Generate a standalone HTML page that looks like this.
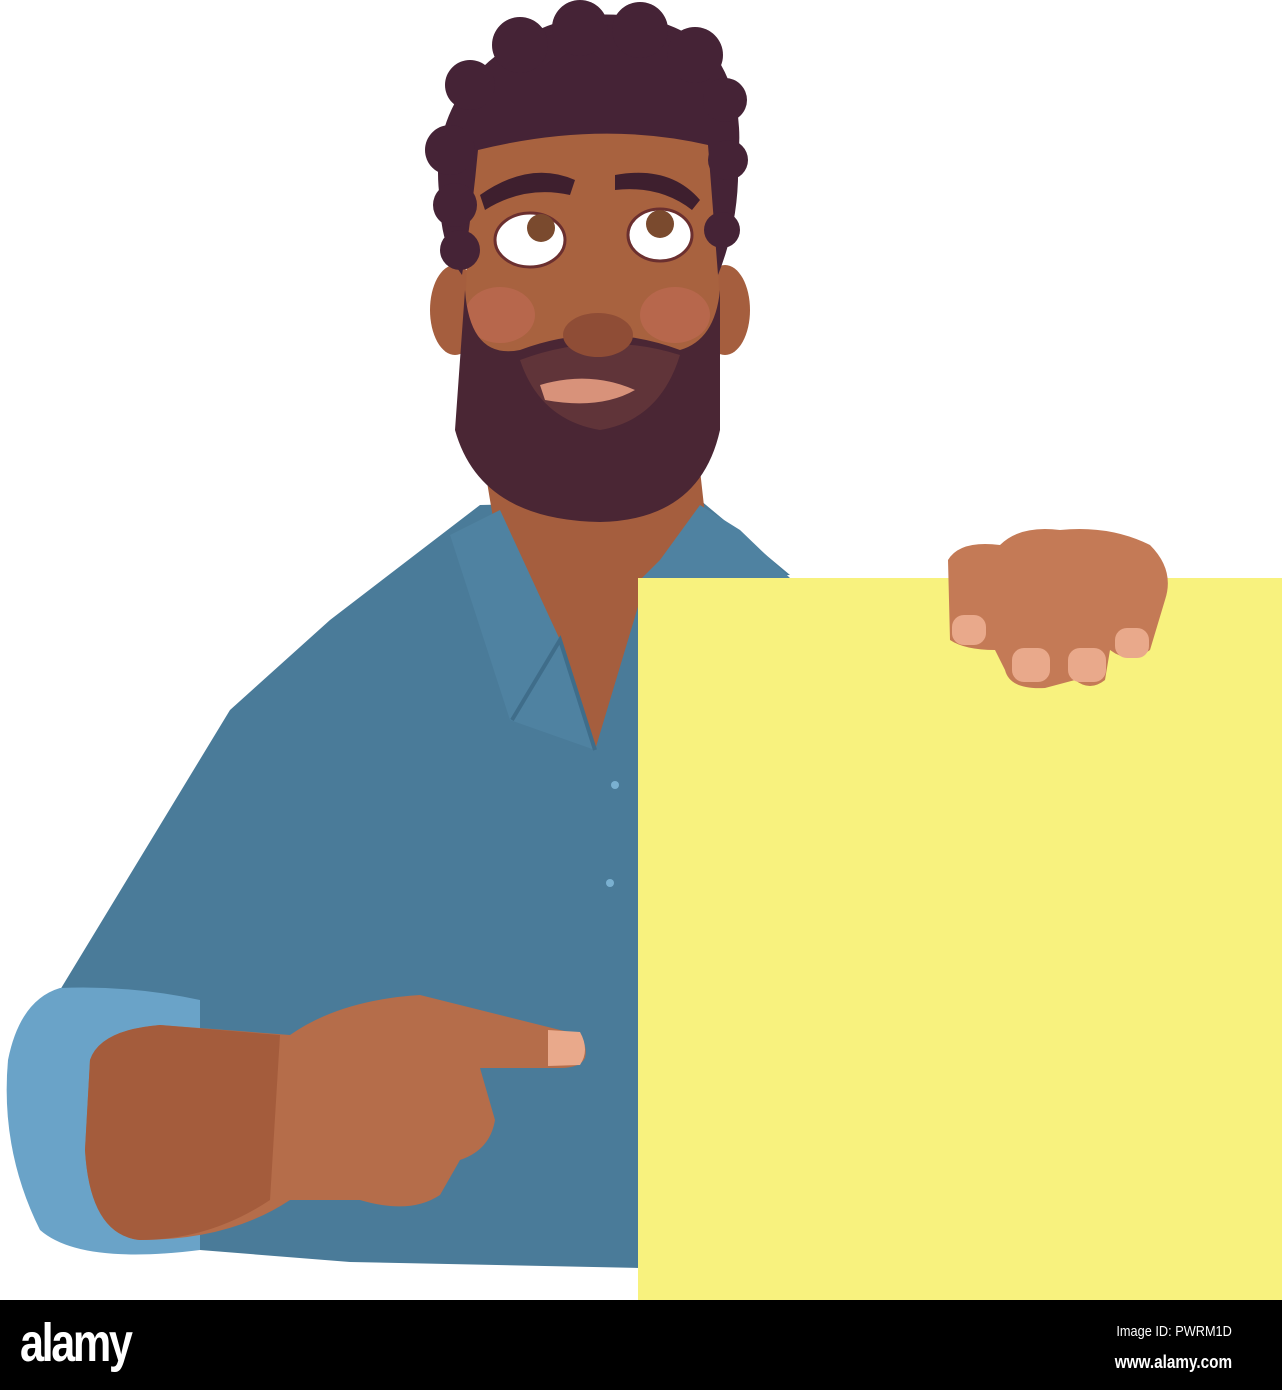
<!DOCTYPE html>
<html><head><style>
html,body{margin:0;padding:0;background:#fff}
.w{position:relative;width:1282px;height:1390px;overflow:hidden}
.bar{position:absolute;left:0;top:1300px;width:1282px;height:90px;background:#000;color:#fff;font-family:"Liberation Sans",sans-serif}
</style></head><body><div class="w">
<svg width="1282" height="1300" viewBox="0 0 1282 1300" style="position:absolute;left:0;top:0">
<path d="M480 505 L700 500 L790 575 L640 580 L640 1268 L350 1262 L200 1250 L60 990 L230 710 L330 620 Z" fill="#4a7b99"/>
<path d="M485 470 L700 470 L710 560 L640 600 L595 750 L560 640 L500 560 Z" fill="#a55e3e"/>
<path d="M450 535 L500 510 L560 640 L595 750 L510 720 Z" fill="#4f82a1"/>
<path d="M700 505 L740 530 L790 578 L640 580 L660 560 Z" fill="#4f82a1"/>
<path d="M512 720 L560 640 L595 750" fill="none" stroke="#3f6d8a" stroke-width="4"/>
<path d="M60 988 Q20 1000 8 1060 Q0 1150 40 1230 Q80 1265 200 1250 L200 1000 Q130 985 60 988 Z" fill="#6aa3c8"/>
<path d="M90 1060 Q100 1030 160 1025 L290 1035 Q340 1000 420 995 L560 1030 Q590 1035 585 1058 Q580 1068 560 1068 L480 1068 L495 1120 Q490 1150 460 1160 L440 1195 Q410 1215 360 1200 L290 1200 Q230 1240 140 1240 Q90 1235 85 1150 Z" fill="#b56d4a"/>
<path d="M90 1060 Q100 1030 160 1025 L280 1035 L270 1200 Q210 1240 140 1240 Q90 1235 85 1150 Z" fill="#a45c3c"/>
<path d="M548 1030 L580 1032 Q590 1050 580 1065 L548 1066 Z" fill="#e9a98b"/>
<ellipse cx="455" cy="310" rx="25" ry="45" fill="#a55e3e"/>
<ellipse cx="725" cy="310" rx="25" ry="45" fill="#a55e3e"/>
<path d="M470 140 Q590 90 715 145 L720 330 Q715 440 600 480 Q480 440 465 330 Z" fill="#a8623f"/>
<ellipse cx="500" cy="315" rx="35" ry="28" fill="#c26a55" opacity=".6"/>
<ellipse cx="675" cy="315" rx="35" ry="28" fill="#c26a55" opacity=".6"/>
<path d="M465 290 Q470 360 520 350 Q600 320 680 350 Q715 340 720 290 L720 430 Q700 520 600 522 Q480 520 455 430 Z" fill="#4a2634"/>
<path d="M520 360 Q600 330 680 355 Q660 420 600 430 Q540 420 520 360 Z" fill="#6a3a3c" opacity=".7"/>
<path d="M540 385 Q590 370 635 390 Q600 410 545 400 Z" fill="#d8927a"/>
<ellipse cx="598" cy="335" rx="35" ry="22" fill="#8f4d36"/>
<g fill="#452336">
<path d="M440 200 Q430 130 470 80 Q520 25 590 15 Q670 10 715 55 Q745 100 738 160 Q740 220 718 275 L708 145 Q600 120 478 150 Q472 215 462 275 Q440 245 440 200 Z"/>
<circle cx="450" cy="150" r="25"/><circle cx="455" cy="205" r="22"/><circle cx="460" cy="250" r="20"/>
<circle cx="470" cy="85" r="25"/><circle cx="520" cy="45" r="28"/><circle cx="580" cy="28" r="28"/>
<circle cx="640" cy="30" r="28"/><circle cx="695" cy="55" r="28"/><circle cx="725" cy="100" r="22"/>
<circle cx="728" cy="160" r="20"/><circle cx="722" cy="230" r="18"/>
</g>
<path d="M480 195 Q530 160 575 180 L570 195 Q525 185 485 210 Z" fill="#3e1f2e"/>
<path d="M615 175 Q670 165 700 200 L692 210 Q660 185 615 190 Z" fill="#3e1f2e"/>
<ellipse cx="530" cy="240" rx="35" ry="27" fill="#fff" stroke="#6b2f2f" stroke-width="3"/>
<ellipse cx="660" cy="235" rx="32" ry="26" fill="#fff" stroke="#6b2f2f" stroke-width="3"/>
<circle cx="541" cy="228" r="14" fill="#7a4a2e"/>
<circle cx="660" cy="224" r="14" fill="#7a4a2e"/>
<rect x="638" y="578" width="644" height="722" fill="#f8f27e"/>
<path d="M948 560 Q960 540 1000 545 Q1020 525 1060 530 Q1110 525 1150 545 Q1175 570 1165 600 L1150 650 Q1130 665 1110 650 L1105 680 Q1090 692 1075 680 L1045 688 Q1010 690 1005 670 L995 650 Q965 650 950 640 Z" fill="#c47a56"/>
<rect x="952" y="615" width="34" height="30" rx="12" fill="#e9a98b"/>
<rect x="1012" y="648" width="38" height="34" rx="12" fill="#e9a98b"/>
<rect x="1068" y="648" width="38" height="34" rx="12" fill="#e9a98b"/>
<rect x="1115" y="628" width="34" height="30" rx="12" fill="#e9a98b"/>
<circle cx="615" cy="785" r="4" fill="#7ab0d0"/>
<circle cx="610" cy="883" r="4" fill="#7ab0d0"/>
</svg>
<div class="bar">
<div style="position:absolute;left:20px;top:12px;font-size:54px;font-weight:bold;letter-spacing:-3px;transform:scaleX(.8);transform-origin:left">alamy</div>
<div style="position:absolute;right:50px;top:23px;font-size:15px;transform:scaleX(.85);transform-origin:right">Image ID: PWRM1D</div>
<div style="position:absolute;right:50px;top:52px;font-size:18px;font-weight:bold;transform:scaleX(.85);transform-origin:right">www.alamy.com</div>
</div>
</div></body></html>
